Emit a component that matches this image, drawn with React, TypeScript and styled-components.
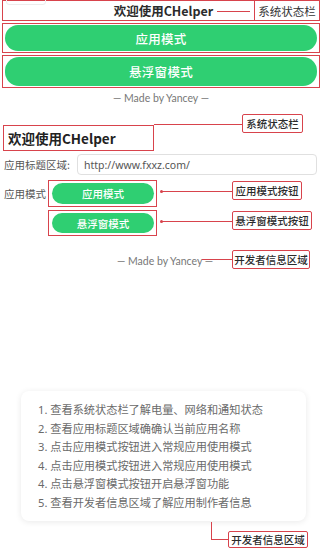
import React from "react";
import styled, { createGlobalStyle } from "styled-components";

const RED = "#d8434c";
const GREEN = "#2fcf72";

const Global = createGlobalStyle`
  html, body { margin: 0; padding: 0; background: #ffffff; }
  body { font-family: "Noto Sans", "Noto Sans CJK SC", sans-serif; }
  * { box-sizing: border-box; }
`;

const Page = styled.div`
  position: relative;
  width: 322px;
  height: 554px;
  overflow: hidden;
  background: #fff;
`;

/* ---------- section 1 ---------- */
const TopSection = styled.section`
  display: flex;
  flex-direction: column;
  gap: 2px;
  padding: 0 2px;
`;

const StatusBar = styled.div`
  position: relative;
  height: 21px;
  border: 1px solid ${RED};
  display: flex;
  align-items: center;
`;

const FaintChip = styled.div`
  position: absolute;
  left: 3px;
  top: -6px;
  width: 40px;
  height: 10px;
  border: 1px solid #ececec;
  border-radius: 3px;
`;

const StatusTitle = styled.div`
  width: 251px;
  text-align: center;
  padding-left: 70px;
  font-size: 12.5px;
  font-weight: 600;
  color: #2b2b2b;
  font-family: "Noto Sans CJK SC", sans-serif;
  white-space: nowrap;
`;

const StatusLabel = styled.div`
  flex: 1;
  height: 100%;
  border-left: 1px solid ${RED};
  display: flex;
  align-items: center;
  justify-content: center;
  font-size: 11.5px;
  color: #333;
  font-family: "Noto Sans CJK SC", sans-serif;
`;

const BigFrame = styled.div<{ $h: number }>`
  height: ${(p) => p.$h}px;
  border: 1px solid ${RED};
  padding: 1px 2px;
  display: flex;
  align-items: center;
`;

const BigPill = styled.div`
  flex: 1;
  height: 100%;
  border-radius: 14px;
  background: ${GREEN};
  color: #fff;
  font-size: 12.5px;
  font-weight: 500;
  display: flex;
  align-items: center;
  justify-content: center;
  font-family: "Noto Sans CJK SC", sans-serif;
  letter-spacing: 0.3px;
`;

const MadeBy = styled.div<{ $pad?: number }>`
  font-family: Lato, "Noto Sans", sans-serif;
  font-size: 10.5px;
  color: #777;
  line-height: 16px;
  white-space: nowrap;
  ${(p) => (p.$pad !== undefined ? `padding-left: ${p.$pad}px;` : "text-align: center;")}
`;

/* ---------- section 2 ---------- */
const MidSection = styled.section`
  margin-top: 19px;
  display: flex;
  flex-direction: column;
`;

const TitleFrame = styled.div`
  margin-left: 3px;
  width: 151px;
  height: 26px;
  border: 1.5px solid ${RED};
  display: flex;
  align-items: center;
  padding-left: 4px;
  font-size: 13.5px;
  font-weight: 700;
  color: #222;
  font-family: "Noto Sans CJK SC", sans-serif;
`;

const FieldRow = styled.div`
  margin-top: 3px;
  display: flex;
  align-items: center;
  padding-left: 4px;
  height: 21px;
`;

const FieldLabel = styled.div`
  width: 73px;
  flex-shrink: 0;
  font-size: 10.5px;
  color: #555;
  white-space: nowrap;
  font-family: "Noto Sans CJK SC", sans-serif;
`;

const FakeInput = styled.div`
  width: 240px;
  height: 21px;
  border: 1px solid #e0e0e0;
  border-radius: 4px;
  padding-left: 6px;
  display: flex;
  align-items: center;
  font-size: 10.5px;
  color: #555;
`;

const ModeRow = styled.div<{ $mt: number }>`
  margin-top: ${(p) => p.$mt}px;
  display: flex;
  align-items: center;
  padding-left: 4px;
`;

const ModeLabel = styled.div`
  width: 44px;
  flex-shrink: 0;
  font-size: 10.5px;
  color: #555;
  white-space: nowrap;
  font-family: "Noto Sans CJK SC", sans-serif;
`;

const SmallFrame = styled.div<{ $h: number }>`
  width: 109px;
  height: ${(p) => p.$h}px;
  border: 1px solid ${RED};
  padding: 2px 2px 2px 3px;
  display: flex;
`;

const SmallPill = styled.div`
  flex: 1;
  border-radius: 11px;
  background: ${GREEN};
  color: #fff;
  font-size: 10.5px;
  font-weight: 500;
  display: flex;
  align-items: center;
  justify-content: center;
  font-family: "Noto Sans CJK SC", sans-serif;
`;

/* ---------- section 3 ---------- */
const Card = styled.div`
  margin: 122px 0 0 21px;
  width: 285px;
  height: 130px;
  border-radius: 8px;
  background: #fff;
  box-shadow: 0 1px 6px rgba(0, 0, 0, 0.09);
  padding: 10px 0 0 17px;
`;

const Steps = styled.ol`
  list-style: none;
  margin: 0;
  padding: 0;
`;

const Step = styled.li`
  font-size: 11.2px;
  line-height: 18.6px;
  color: #6a6a6a;
  font-family: "Noto Sans", "Noto Sans CJK SC", sans-serif;
  white-space: nowrap;
`;

/* ---------- annotations (overlay) ---------- */
const Callout = styled.div<{ $x: number; $y: number; $w: number; $h: number }>`
  position: absolute;
  left: ${(p) => p.$x}px;
  top: ${(p) => p.$y}px;
  width: ${(p) => p.$w}px;
  height: ${(p) => p.$h}px;
  border: 1.5px solid ${RED};
  border-radius: 2px;
  background: #fff;
  display: flex;
  align-items: center;
  justify-content: center;
  font-size: 10.5px;
  color: #2b2b2b;
  font-weight: 500;
  font-family: "Noto Sans CJK SC", sans-serif;
  white-space: nowrap;
`;

const HLine = styled.div<{ $x: number; $y: number; $w: number }>`
  position: absolute;
  left: ${(p) => p.$x}px;
  top: ${(p) => p.$y}px;
  width: ${(p) => p.$w}px;
  height: 1px;
  background: ${RED};
`;

const VLine = styled.div<{ $x: number; $y: number; $h: number }>`
  position: absolute;
  left: ${(p) => p.$x}px;
  top: ${(p) => p.$y}px;
  width: 1px;
  height: ${(p) => p.$h}px;
  background: ${RED};
`;

const Dot = styled.div<{ $x: number; $y: number }>`
  position: absolute;
  left: ${(p) => p.$x}px;
  top: ${(p) => p.$y}px;
  width: 3px;
  height: 3px;
  border-radius: 50%;
  background: ${RED};
`;

const steps = [
  "1. 查看系统状态栏了解电量、网络和通知状态",
  "2. 查看应用标题区域确确认当前应用名称",
  "3. 点击应用模式按钮进入常规应用使用模式",
  "4. 点击应用模式按钮进入常规应用使用模式",
  "4. 点击悬浮窗模式按钮开启悬浮窗功能",
  "5. 查看开发者信息区域了解应用制作者信息",
];

export default function App() {
  return (
    <Page>
      <Global />
      <TopSection>
        <StatusBar>
          <FaintChip />
          <StatusTitle>欢迎使用CHelper</StatusTitle>
          <StatusLabel>系统状态栏</StatusLabel>
        </StatusBar>
        <BigFrame $h={30}>
          <BigPill>应用模式</BigPill>
        </BigFrame>
        <BigFrame $h={33}>
          <BigPill>悬浮窗模式</BigPill>
        </BigFrame>
        <MadeBy>— Made by Yancey —</MadeBy>
      </TopSection>

      <MidSection>
        <TitleFrame>欢迎使用CHelper</TitleFrame>
        <FieldRow>
          <FieldLabel>应用标题区域:</FieldLabel>
          <FakeInput>http://www.fxxz.com/</FakeInput>
        </FieldRow>
        <ModeRow $mt={5}>
          <ModeLabel>应用模式</ModeLabel>
          <SmallFrame $h={27}>
            <SmallPill>应用模式</SmallPill>
          </SmallFrame>
        </ModeRow>
        <ModeRow $mt={3}>
          <ModeLabel />
          <SmallFrame $h={26}>
            <SmallPill>悬浮窗模式</SmallPill>
          </SmallFrame>
        </ModeRow>
        <MadeBy $pad={117} style={{ marginTop: 17 }}>
          — Made by Yancey —
        </MadeBy>
      </MidSection>

      <Card>
        <Steps>
          {steps.map((s, i) => (
            <Step key={i}>{s}</Step>
          ))}
        </Steps>
      </Card>

      {/* overlay annotations */}
      <HLine $x={217} $y={11} $w={33} />

      <HLine $x={154} $y={124} $w={88} />
      <Callout $x={242} $y={114} $w={61} $h={19}>系统状态栏</Callout>

      <Dot $x={160} $y={190} />
      <HLine $x={161} $y={191} $w={71} />
      <Callout $x={232} $y={181} $w={70} $h={19}>应用模式按钮</Callout>

      <Dot $x={160} $y={220} />
      <HLine $x={161} $y={221} $w={71} />
      <Callout $x={232} $y={211} $w={80} $h={19}>悬浮窗模式按钮</Callout>

      <HLine $x={202} $y={259} $w={30} />
      <Callout $x={232} $y={250} $w={78} $h={19}>开发者信息区域</Callout>

      <VLine $x={211} $y={522} $h={18} />
      <HLine $x={211} $y={539} $w={17} />
      <Callout $x={228} $y={531} $w={80} $h={17}>开发者信息区域</Callout>
    </Page>
  );
}
